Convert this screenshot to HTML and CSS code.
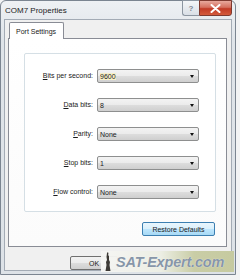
FILE: index.html
```html
<!DOCTYPE html>
<html lang="en">
<head>
  <meta charset="UTF-8">
  <title>COM7 Properties</title>
  <link rel="stylesheet" href="styles.css">
</head>
<body>
  <div class="window">
    <div class="titlebar">
      <span class="title">COM7 Properties</span>
      <div class="controls">
        <span class="btn-help">?</span>
        <span class="btn-close">
          <svg width="11" height="9" viewBox="0 0 11 9"><path d="M1.5 1 L9.5 8 M9.5 1 L1.5 8" stroke="#fff" stroke-width="2" stroke-linecap="round"/></svg>
        </span>
      </div>
    </div>

    <div class="client">
      <div class="tabs">
        <span class="tab">Port Settings</span>
      </div>
      <div class="panel">
        <div class="group">
          <label class="lbl"><u>B</u>its per second:</label>
          <div class="combo focus"><span>9600</span><i class="arrow"></i></div>
          <label class="lbl"><u>D</u>ata bits:</label>
          <div class="combo"><span>8</span><i class="arrow"></i></div>
          <label class="lbl"><u>P</u>arity:</label>
          <div class="combo"><span>None</span><i class="arrow"></i></div>
          <label class="lbl"><u>S</u>top bits:</label>
          <div class="combo"><span>1</span><i class="arrow"></i></div>
          <label class="lbl"><u>F</u>low control:</label>
          <div class="combo"><span>None</span><i class="arrow"></i></div>
        </div>
        <div class="restore-row">
          <button class="btn default">Restore Defaults</button>
        </div>
      </div>
      <div class="footer">
        <button class="btn ok">OK</button>
      </div>
      <div class="watermark">
        <svg class="statue" width="8" height="20" viewBox="0 0 8 20">
          <path d="M3 1 L4 0 L4.5 2 L4 3 L5 4 L5 8 L6 10 L5.5 13 L6.5 19 L1.5 19 L2.5 13 L2 10 L3 8 L2.5 5 Z" fill="#3d3a36"/>
        </svg>
        <span class="wm-text">SAT-Expert.com</span>
      </div>
    </div>
  </div>
</body>
</html>
```

FILE: styles.css
```css
body {
  margin: 0;
  background: #f2f3f4;
  font-family: "Liberation Sans", Arial, sans-serif;
  color: #1a1a1a;
}
.window {
  width: 236px;
  height: 275px;
  box-sizing: border-box;
  border: 1px solid #7b8591;
  border-radius: 6px 6px 0 0;
  background: linear-gradient(#eef1f4, #dfe4e9 40px, #dde2e7);
  padding: 0 3px 3px 3px;
  display: flex;
  flex-direction: column;
}
.titlebar {
  height: 19px;
  display: flex;
  justify-content: space-between;
  align-items: flex-start;
}
.title {
  font-size: 8px;
  color: #222;
  margin: 5px 0 0 1px;
}
.controls {
  display: flex;
  margin-top: -1px;
}
.btn-help {
  width: 17px;
  height: 16px;
  box-sizing: border-box;
  border: 1px solid #8c96a1;
  border-right: none;
  border-radius: 0 0 0 3px;
  background: linear-gradient(#f4f6f8, #d9dfe6);
  font-size: 8px;
  font-weight: bold;
  color: #7f8894;
  text-align: center;
  line-height: 15px;
}
.btn-close {
  width: 33px;
  height: 16px;
  box-sizing: border-box;
  border: 1px solid #7e3a30;
  border-radius: 0 0 3px 0;
  background: linear-gradient(#e8a99d, #d5705f 45%, #c23b26 55%, #d35b3c);
  display: flex;
  align-items: center;
  justify-content: center;
}
.client {
  flex: 1;
  position: relative;
  background: #f0f0f0;
  border: 1px solid #a3abb5;
  padding: 2px 4px 0 3px;
}
.tabs {
  display: flex;
  padding-left: 1px;
  position: relative;
  z-index: 1;
  margin-bottom: -1px;
}
.tab {
  font-size: 7px;
  height: 16px;
  line-height: 17px;
  padding: 0 7px 0 6px;
  background: #fff;
  border: 1px solid #898c95;
  border-bottom: none;
  border-radius: 2px 2px 0 0;
}
.panel {
  background: linear-gradient(#fff, #fbfbfb);
  border: 1px solid #898c95;
  padding: 14px 10px 10px 15px;
}
.group {
  height: 159px;
  box-sizing: border-box;
  background: #fff;
  border: 1px solid #d5dfe5;
  border-radius: 2px;
  padding: 15px 0 0 0;
  display: grid;
  grid-template-columns: 68px 102px;
  column-gap: 4px;
  row-gap: 15px;
  align-content: start;
}
.lbl {
  font-size: 7px;
  text-align: right;
  line-height: 14px;
}
.combo {
  height: 14px;
  box-sizing: border-box;
  border: 1px solid #8e8f8f;
  border-radius: 2px;
  background: linear-gradient(#f3f3f3, #ebebeb 50%, #dddddd 51%, #cfcfcf);
  display: flex;
  align-items: center;
  justify-content: space-between;
  padding: 0 4px 0 2px;
  font-size: 7px;
}
.combo.focus span {
  background: #f7f0c8;
}
.arrow {
  width: 0;
  height: 0;
  border-left: 2.5px solid transparent;
  border-right: 2.5px solid transparent;
  border-top: 3px solid #111;
}
.restore-row {
  display: flex;
  justify-content: flex-end;
  margin-top: 10px;
  padding-right: 1px;
}
.btn {
  font-family: "Liberation Sans", Arial, sans-serif;
  font-size: 7px;
  color: #1a1a1a;
  height: 14px;
  padding: 0;
  box-sizing: border-box;
  border: 1px solid #707070;
  border-radius: 2px;
  background: linear-gradient(#f2f2f2, #ebebeb 50%, #dddddd 51%, #cfcfcf);
}
.btn.default {
  width: 73px;
  border-color: #3c7fb1;
  background: linear-gradient(#eaf6fd, #d9f0fc 50%, #bee6fd 51%, #a7d9f5);
}
.footer {
  display: flex;
  margin-top: 9px;
  padding-left: 62px;
}
.footer .btn {
  width: 48px;
}
.watermark {
  position: absolute;
  left: 96px;
  top: 231px;
  width: 133px;
  height: 21px;
  display: flex;
  align-items: center;
  background: linear-gradient(90deg, rgba(246,246,244,0.95), #eceee4 45%, #c9cda6 70%, #c6caa0);
}
.statue {
  margin: 0 4px 0 3px;
}
.wm-text {
  font-size: 14.5px;
  font-weight: bold;
  font-style: italic;
  color: #8796a8;
  letter-spacing: -0.2px;
  text-shadow: 0 0 1px #fff;
}
```
